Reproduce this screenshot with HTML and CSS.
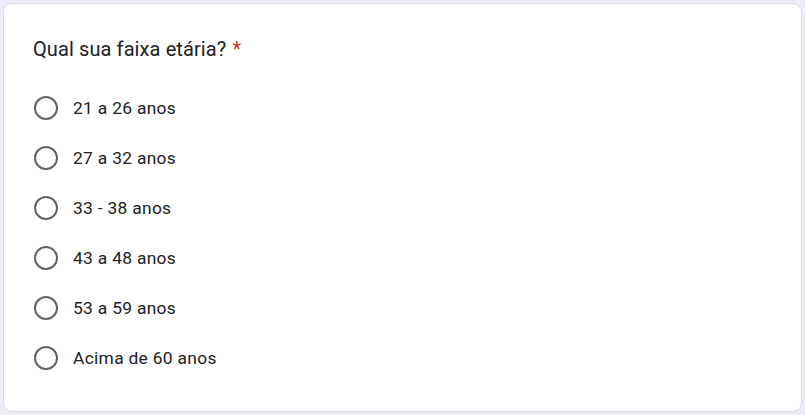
FILE: index.html
```html
<!DOCTYPE html>
<html lang="pt">
<head>
<meta charset="utf-8">
<link rel="stylesheet" href="styles.css">
</head>
<body>
<div class="page">
  <div class="card">
    <div class="title">Qual sua faixa etária? <span class="req">*</span></div>
    <div class="options">
      <label class="opt"><span class="radio"></span><span class="txt">21 a 26 anos</span></label>
      <label class="opt"><span class="radio"></span><span class="txt">27 a 32 anos</span></label>
      <label class="opt"><span class="radio"></span><span class="txt">33 - 38 anos</span></label>
      <label class="opt"><span class="radio"></span><span class="txt">43 a 48 anos</span></label>
      <label class="opt"><span class="radio"></span><span class="txt">53 a 59 anos</span></label>
      <label class="opt"><span class="radio"></span><span class="txt">Acima de 60 anos</span></label>
    </div>
  </div>
</div>
</body>
</html>
```
FILE: styles.css
```css
html, body {
  margin: 0;
  padding: 0;
  background: #f0ebf8;
}
.page {
  width: 805px;
  height: 415px;
  padding: 3px 3px 3px 3px;
  box-sizing: border-box;
}
.card {
  box-sizing: border-box;
  width: 799px;
  height: 409px;
  background: #fff;
  border: 1px solid #dadce0;
  border-radius: 9px;
  padding: 32px 29px 0 29px;
  font-family: Roboto, "Liberation Sans", sans-serif;
  color: #202124;
}
.title {
  font-size: 20px;
  line-height: 26px;
  letter-spacing: 0.1px;
}
.req {
  color: #d93025;
  margin-left: 1px;
}
.options {
  display: flex;
  flex-direction: column;
  margin-top: 34px;
  gap: 26px;
}
.opt {
  display: flex;
  align-items: center;
  height: 24px;
}
.radio {
  box-sizing: border-box;
  width: 24px;
  height: 24px;
  border: 2px solid #5f6368;
  border-radius: 50%;
  margin-left: 1px;
  flex: none;
}
.txt {
  margin-left: 15px;
  font-size: 17.4px;
  letter-spacing: 0.3px;
}
```
